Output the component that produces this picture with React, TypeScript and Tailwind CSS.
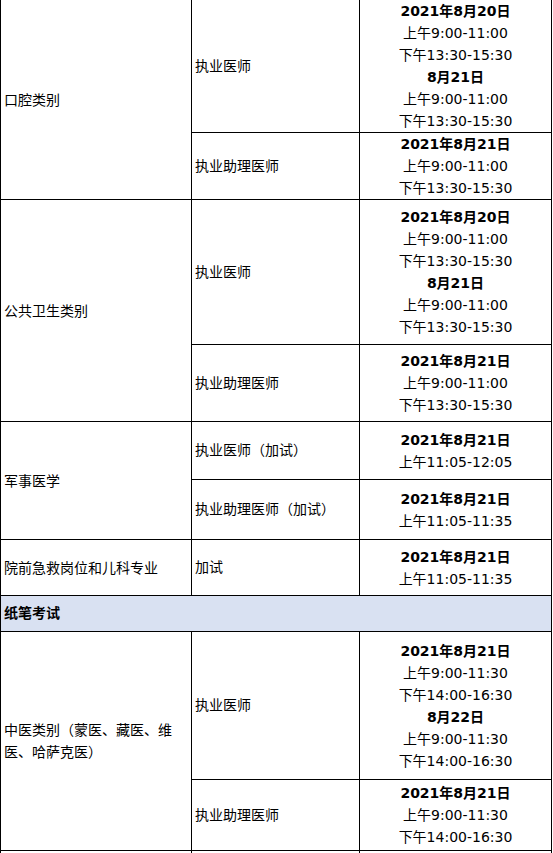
import React from "react";

type Line = { text: string; bold?: boolean };

const b = (text: string): Line => ({ text, bold: true });
const t = (text: string): Line => ({ text });

type Sub = { role: string; lines: Line[]; h: number };
type Group = { name: React.ReactNode; subs: Sub[] };

const before: Group[] = [
  {
    name: "口腔类别",
    subs: [
      { role: "执业医师", h: 132, lines: [b("2021年8月20日"), t("上午9:00-11:00"), t("下午13:30-15:30"), b("8月21日"), t("上午9:00-11:00"), t("下午13:30-15:30")] },
      { role: "执业助理医师", h: 67, lines: [b("2021年8月21日"), t("上午9:00-11:00"), t("下午13:30-15:30")] },
    ],
  },
  {
    name: "公共卫生类别",
    subs: [
      { role: "执业医师", h: 145, lines: [b("2021年8月20日"), t("上午9:00-11:00"), t("下午13:30-15:30"), b("8月21日"), t("上午9:00-11:00"), t("下午13:30-15:30")] },
      { role: "执业助理医师", h: 77, lines: [b("2021年8月21日"), t("上午9:00-11:00"), t("下午13:30-15:30")] },
    ],
  },
  {
    name: "军事医学",
    subs: [
      { role: "执业医师（加试）", h: 58, lines: [b("2021年8月21日"), t("上午11:05-12:05")] },
      { role: "执业助理医师（加试）", h: 60, lines: [b("2021年8月21日"), t("上午11:05-11:35")] },
    ],
  },
  {
    name: "院前急救岗位和儿科专业",
    subs: [{ role: "加试", h: 56, lines: [b("2021年8月21日"), t("上午11:05-11:35")] }],
  },
];

const after: Group[] = [
  {
    name: (
      <>
        中医类别（蒙医、藏医、维
        <br />
        医、哈萨克医）
      </>
    ),
    subs: [
      { role: "执业医师", h: 148, lines: [b("2021年8月21日"), t("上午9:00-11:30"), t("下午14:00-16:30"), b("8月22日"), t("上午9:00-11:30"), t("下午14:00-16:30")] },
      { role: "执业助理医师", h: 71, lines: [b("2021年8月21日"), t("上午9:00-11:30"), t("下午14:00-16:30")] },
    ],
  },
];

const cell = "border-x border-b border-black align-middle";

function Rows({ groups }: { groups: Group[] }) {
  return (
    <>
      {groups.map((g, gi) =>
        g.subs.map((s, si) => (
          <tr key={`${gi}-${si}`} style={{ height: s.h }}>
            {si === 0 && (
              <td rowSpan={g.subs.length} className={`${cell} px-[3px] leading-[22px]`}>
                {g.name}
              </td>
            )}
            <td className={`${cell} px-[3px]`}>{s.role}</td>
            <td className={`${cell} text-center leading-[22px]`}>
              {s.lines.map((l, li) => (
                <div key={li} className={l.bold ? "font-bold" : ""}>
                  {l.text}
                </div>
              ))}
            </td>
          </tr>
        ))
      )}
    </>
  );
}

export default function App() {
  return (
    <div className="h-[853px] w-[553px] overflow-hidden bg-white">
      <table className="w-[551px] table-fixed border-collapse font-['DejaVu_Sans','Noto_Sans_CJK_SC',sans-serif] text-[14px] text-black">
        <colgroup>
          <col className="w-[191px]" />
          <col className="w-[168px]" />
          <col className="w-[192px]" />
        </colgroup>
        <tbody>
          <Rows groups={before} />
          <tr className="h-[36px] bg-[#d9e1f2]">
            <td colSpan={3} className={`${cell} px-[3px] font-bold`}>
              纸笔考试
            </td>
          </tr>
          <Rows groups={after} />
          <tr className="h-[24px]">
            <td className={cell} />
            <td className={cell} />
            <td className={cell} />
          </tr>
        </tbody>
      </table>
    </div>
  );
}
